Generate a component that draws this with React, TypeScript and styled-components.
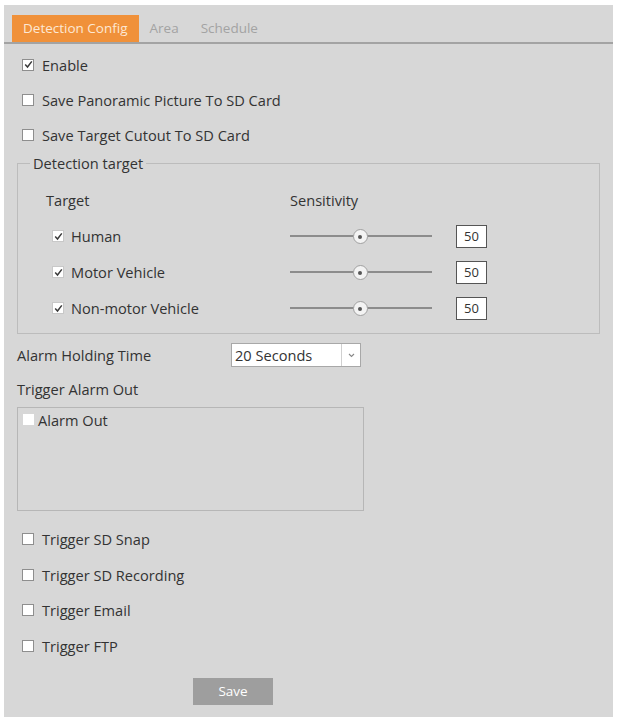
import React from 'react';
import styled, { createGlobalStyle } from 'styled-components';

const GlobalStyle = createGlobalStyle`
    body {
        margin: 0;
        background: #ffffff;
        font-family: "Open Sans", "Noto Sans", sans-serif;
        color: #333333;
    }
`

const Panel = styled.div`
    margin: 5px 0 0 4px;
    width: 609px;
    height: 712px;
    background: #d7d7d7;
    display: flex;
    flex-direction: column;
`

const TabBar = styled.div`
    display: flex;
    align-items: flex-end;
    height: 37px;
    padding-left: 8px;
    border-bottom: 2px solid #a3a3a3;
`

const Tab = styled.div<{ $active?: boolean }>`
    height: 27px;
    line-height: 27px;
    padding: 0 11px;
    font-size: 13.5px;
    background: ${p => p.$active ? '#f0913a' : 'transparent'};
    color: ${p => p.$active ? '#fde8d4' : '#a3a3a3'};
`

const Body = styled.div`
    display: flex;
    flex-direction: column;
    padding: 3px 0 0 13px;
    font-size: 14.6px;
`

const CheckRow = styled.label<{ $h?: number }>`
    display: flex;
    align-items: center;
    gap: 8px;
    height: ${p => p.$h ?? 35}px;
    padding-left: 5px;
`

const Box = styled.span<{ $subtle?: boolean }>`
    width: 10px;
    height: 10px;
    flex: none;
    background: #ffffff;
    border: 1px solid ${p => p.$subtle ? '#c8c8c8' : '#8e8e8e'};
    display: flex;
    align-items: center;
    justify-content: center;
`

const Fieldset = styled.fieldset`
    margin: 0;
    width: 583px;
    padding: 9px 0 7px 0;
    border: 1px solid #bcbcbc;
    box-sizing: border-box;
`

const Legend = styled.legend`
    margin-left: 12px;
    padding: 0 3px;
    line-height: 20px;
`

const TargetGrid = styled.div`
    display: grid;
    grid-template-columns: 244px 166px 31px;
    grid-auto-rows: 36px;
    align-items: center;
    padding-left: 28px;
`

const TargetLabel = styled.div`
    display: flex;
    align-items: center;
    gap: 7px;
    padding-left: 6px;
`

const Track = styled.div`
    position: relative;
    width: 142px;
    height: 2px;
    background: #8c8c8c;
`

const Thumb = styled.span`
    position: absolute;
    top: 50%;
    width: 13px;
    height: 13px;
    margin: -7px 0 0 -7px;
    border-radius: 50%;
    background: #f3f3f3;
    border: 1px solid #a0a0a0;
    display: flex;
    align-items: center;
    justify-content: center;
    &::after {
        content: '';
        width: 4px;
        height: 4px;
        border-radius: 50%;
        background: #555555;
    }
`

const NumBox = styled.div`
    width: 29px;
    height: 21px;
    border: 1px solid #555555;
    background: #ffffff;
    font-size: 13px;
    line-height: 21px;
    text-align: center;
`

const FieldRow = styled.div`
    display: flex;
    align-items: center;
    height: 42px;
`

const FieldLabel = styled.div`
    width: 214px;
`

const Select = styled.div`
    display: flex;
    width: 128px;
    height: 22px;
    border: 1px solid #a8a8a8;
    background: #ffffff;
`

const SelectText = styled.div`
    flex: 1;
    padding-left: 3px;
    line-height: 22px;
`

const SelectArrow = styled.div`
    width: 18px;
    border-left: 1px solid #d0d0d0;
    display: flex;
    align-items: center;
    justify-content: center;
`

const Heading = styled.div`
    height: 24px;
    line-height: 24px;
    margin-top: 1px;
`

const AlarmBox = styled.div`
    margin-top: 6px;
    width: 347px;
    height: 104px;
    border: 1px solid #b6b6b6;
    padding: 5px;
    box-sizing: border-box;
`

const AlarmItem = styled.label`
    display: flex;
    align-items: center;
    gap: 4px;
    height: 13px;
`

const PlainBox = styled.span`
    width: 11px;
    height: 11px;
    background: #ffffff;
`

const TriggerList = styled.div`
    margin-top: 10px;
    display: flex;
    flex-direction: column;
`

const SaveButton = styled.button`
    margin: 14px 0 0 176px;
    width: 80px;
    height: 27px;
    border: none;
    background: #9e9e9e;
    color: #ffffff;
    font-family: inherit;
    font-size: 13.5px;
`

function Check({ checked, subtle }: { checked?: boolean, subtle?: boolean }) {
    return (
        <Box $subtle={subtle}>
            {checked &&
                <svg width="9" height="9" viewBox="0 0 9 9">
                    <path d="M1.2 4.6 L3.5 7 L7.8 1.4" fill="none" stroke="#3a3a3a" strokeWidth="1.5" />
                </svg>
            }
        </Box>
    )
}

const targets = ['Human', 'Motor Vehicle', 'Non-motor Vehicle']
const triggers = ['Trigger SD Snap', 'Trigger SD Recording', 'Trigger Email', 'Trigger FTP']

export default function App() {
    return (
        <>
            <GlobalStyle />
            <Panel>
                <TabBar>
                    <Tab $active>Detection Config</Tab>
                    <Tab>Area</Tab>
                    <Tab>Schedule</Tab>
                </TabBar>
                <Body>
                    <CheckRow><Check checked />Enable</CheckRow>
                    <CheckRow><Check />Save Panoramic Picture To SD Card</CheckRow>
                    <CheckRow $h={36}><Check />Save Target Cutout To SD Card</CheckRow>

                    <Fieldset>
                        <Legend>Detection target</Legend>
                        <TargetGrid>
                            <div>Target</div>
                            <div>Sensitivity</div>
                            <div />
                            {targets.map(t => (
                                <React.Fragment key={t}>
                                    <TargetLabel><Check checked subtle />{t}</TargetLabel>
                                    <Track><Thumb style={{ left: '49%' }} /></Track>
                                    <NumBox>50</NumBox>
                                </React.Fragment>
                            ))}
                        </TargetGrid>
                    </Fieldset>

                    <FieldRow>
                        <FieldLabel>Alarm Holding Time</FieldLabel>
                        <Select>
                            <SelectText>20 Seconds</SelectText>
                            <SelectArrow>
                                <svg width="7" height="5" viewBox="0 0 7 5">
                                    <path d="M1 1 L3.5 3.5 L6 1" fill="none" stroke="#888" strokeWidth="1.1" />
                                </svg>
                            </SelectArrow>
                        </Select>
                    </FieldRow>

                    <Heading>Trigger Alarm Out</Heading>
                    <AlarmBox>
                        <AlarmItem><PlainBox />Alarm Out</AlarmItem>
                    </AlarmBox>

                    <TriggerList>
                        {triggers.map(t => (
                            <CheckRow key={t} $h={35.7}><Check />{t}</CheckRow>
                        ))}
                    </TriggerList>

                    <SaveButton>Save</SaveButton>
                </Body>
            </Panel>
        </>
    )
}
